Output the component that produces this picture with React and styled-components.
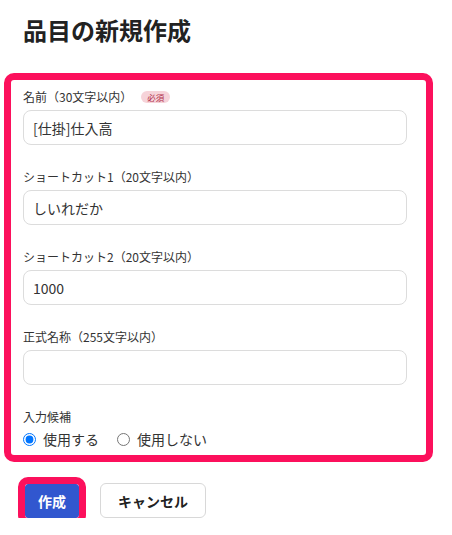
import React from "react";
import styled, { createGlobalStyle } from "styled-components";

const Global = createGlobalStyle`
  html, body { margin: 0; padding: 0; background: #fff; }
  body {
    font-family: "Noto Sans CJK JP", "Noto Sans", sans-serif;
    color: #333;
  }
  * { box-sizing: border-box; }
`;

const Page = styled.div`
  width: 452px;
  padding: 14px 0 0 4px;
`;

const Title = styled.h1`
  margin: 0 0 27px 19px;
  font-size: 24px;
  line-height: 32px;
  font-weight: 700;
  color: #222;
`;

const Form = styled.form`
  width: 429px;
  border: 7px solid #fc105c;
  border-radius: 10px;
  padding: 8px 19px 6px 12px;
  display: flex;
  flex-direction: column;
  gap: 23px;
`;

const Field = styled.div`
  display: flex;
  flex-direction: column;
  gap: 4px;
`;

const LabelRow = styled.div`
  display: flex;
  align-items: center;
  gap: 9px;
  height: 18px;
`;

const Label = styled.label`
  font-size: 12px;
  line-height: 18px;
  color: #333;
`;

const Badge = styled.span`
  display: inline-flex;
  align-items: center;
  height: 12px;
  padding: 0 6px;
  border-radius: 6px;
  background: #f6d3d9;
  color: #b0304a;
  font-size: 8.5px;
  line-height: 12px;
`;

const Input = styled.input`
  height: 35px;
  width: 100%;
  border: 1px solid #dcdcdc;
  border-radius: 8px;
  padding: 0 9px;
  font-family: inherit;
  font-size: 14px;
  color: #333;
  background: #fff;
  outline: none;
`;

const RadioRow = styled.div`
  display: flex;
  align-items: center;
  height: 20px;
  margin-top: -1px;
  gap: 18px;
`;

const RadioLabel = styled.label`
  display: inline-flex;
  align-items: center;
  gap: 7px;
  font-size: 14px;
  color: #333;
`;

const Radio = styled.input`
  margin: 0;
  width: 13px;
  height: 13px;
`;

const Buttons = styled.div`
  display: flex;
  align-items: center;
  gap: 21px;
  margin: 21px 0 0 21px;
`;

const Button = styled.button`
  height: ${(p) => (p.$primary ? "34px" : "35px")};
  padding: 0 ${(p) => (p.$primary ? "12px" : "17px")};
  border-radius: ${(p) => (p.$primary ? "3px" : "6px")};
  border: 1px solid ${(p) => (p.$primary ? "#3157cf" : "#d8d8d8")};
  background: ${(p) => (p.$primary ? "#3157cf" : "#fff")};
  color: ${(p) => (p.$primary ? "#fff" : "#222")};
  font-family: inherit;
  font-weight: 700;
  font-size: 14px;
  outline: ${(p) => (p.$highlight ? "7px solid #fc105c" : "none")};
  cursor: pointer;
`;

const fields = [
  { label: "ショートカット1（20文字以内）", value: "しいれだか" },
  { label: "ショートカット2（20文字以内）", value: "1000" },
  { label: "正式名称（255文字以内）", value: "" },
];

export default function App() {
  return (
    <Page>
      <Global />
      <Title>品目の新規作成</Title>
      <Form onSubmit={(e) => e.preventDefault()}>
        <Field>
          <LabelRow>
            <Label>名前（30文字以内）</Label>
            <Badge>必須</Badge>
          </LabelRow>
          <Input defaultValue="[仕掛]仕入高" />
        </Field>
        {fields.map((f) => (
          <Field key={f.label}>
            <LabelRow>
              <Label>{f.label}</Label>
            </LabelRow>
            <Input defaultValue={f.value} />
          </Field>
        ))}
        <Field>
          <LabelRow>
            <Label>入力候補</Label>
          </LabelRow>
          <RadioRow>
            <RadioLabel>
              <Radio type="radio" name="cand" defaultChecked />
              使用する
            </RadioLabel>
            <RadioLabel>
              <Radio type="radio" name="cand" />
              使用しない
            </RadioLabel>
          </RadioRow>
        </Field>
      </Form>
      <Buttons>
        <Button $primary $highlight>作成</Button>
        <Button>キャンセル</Button>
      </Buttons>
    </Page>
  );
}
